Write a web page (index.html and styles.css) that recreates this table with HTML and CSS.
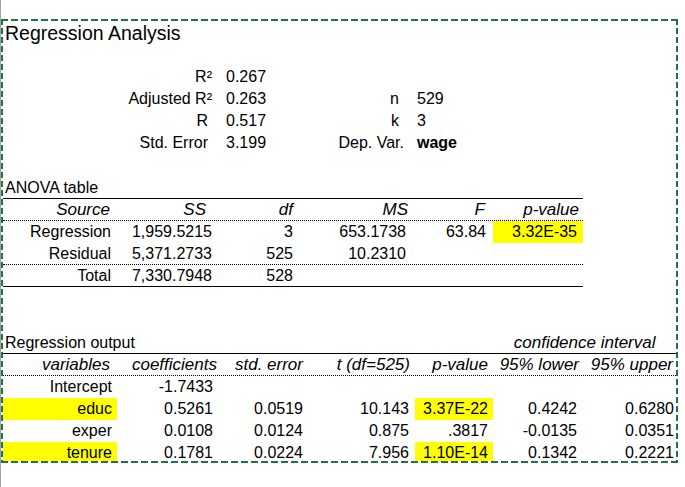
FILE: index.html
```html
<!DOCTYPE html>
<html>
<head>
<meta charset="utf-8">
<link rel="stylesheet" href="styles.css">
</head>
<body>
<div class="frame">
  <div class="title">Regression Analysis</div>

  <div class="stats">
    <div class="row"><span></span><span class="lab">R²</span><span class="val">0.267</span><span class="lab2"></span><span class="val2"></span></div>
    <div class="row"><span></span><span class="lab">Adjusted R²</span><span class="val">0.263</span><span class="lab2">n</span><span class="val2">529</span></div>
    <div class="row"><span></span><span class="lab sp">R</span><span class="val">0.517</span><span class="lab2">k</span><span class="val2">3</span></div>
    <div class="row"><span></span><span class="lab sp">Std. Error</span><span class="val">3.199</span><span class="lab2 dv">Dep. Var.</span><span class="val2 bold">wage</span></div>
  </div>

  <div class="anova">
    <div class="caption">ANOVA table</div>
    <div class="row hdr"><span>Source</span><span>SS</span><span>df</span><span>MS</span><span>F</span><span>p-value</span></div>
    <div class="row"><span>Regression</span><span>1,959.5215</span><span>3</span><span>653.1738</span><span>63.84</span><span class="hl">3.32E-35</span></div>
    <div class="row dotted"><span>Residual</span><span>5,371.2733</span><span>525</span><span>10.2310</span><span></span><span></span></div>
    <div class="row solid"><span>Total</span><span>7,330.7948</span><span>528</span><span></span><span></span><span></span></div>
  </div>

  <div class="output">
    <div class="caption"><span class="cap-left">Regression output</span><span class="ci">confidence interval</span></div>
    <div class="row hdr"><span>variables</span><span>coefficients</span><span>std. error</span><span>t (df=525)</span><span>p-value</span><span>95% lower</span><span>95% upper</span></div>
    <div class="row"><span>Intercept</span><span>-1.7433</span><span></span><span></span><span></span><span></span><span></span></div>
    <div class="row"><span class="hl">educ</span><span>0.5261</span><span>0.0519</span><span>10.143</span><span class="hl">3.37E-22</span><span>0.4242</span><span>0.6280</span></div>
    <div class="row"><span>exper</span><span>0.0108</span><span>0.0124</span><span>0.875</span><span>.3817</span><span>-0.0135</span><span>0.0351</span></div>
    <div class="row"><span class="hl">tenure</span><span>0.1781</span><span>0.0224</span><span>7.956</span><span class="hl">1.10E-14</span><span>0.1342</span><span>0.2221</span></div>
  </div>
</div>
</body>
</html>
```

FILE: styles.css
```css
* { box-sizing: border-box; }

html, body { background: #fff; }

body {
  margin: 0;
  height: 487px;
  border-left: 1px solid #a3a3a3;
  font-family: "Liberation Sans", Arial, sans-serif;
  font-size: 16px;
  color: #000;
  overflow: hidden;
}

.frame {
  margin-top: 19px;
  width: 677px;
  height: 444px;
  border: 2px solid transparent;
  overflow: hidden;
  background-image:
    repeating-linear-gradient(90deg, #217346 0 7px, transparent 7px 10px),
    repeating-linear-gradient(90deg, #217346 0 7px, transparent 7px 10px),
    repeating-linear-gradient(180deg, #217346 0 6px, transparent 6px 9px),
    repeating-linear-gradient(180deg, #217346 0 6px, transparent 6px 9px);
  background-size: 100% 2px, 100% 2px, 2px 100%, 2px 100%;
  background-position: left top, left bottom, left top, right top;
  background-repeat: no-repeat;
  background-origin: border-box;
}

.title {
  height: 24px;
  line-height: 24px;
  font-size: 19.5px;
  padding-left: 2px;
}

.row {
  display: grid;
  grid-template-columns: 114px 101px 90px 107px 78px 90px 93px;
  height: 22px;
  line-height: 22px;
}

.row > span {
  text-align: right;
  white-space: nowrap;
  padding-right: 5px;
}

/* stats block */
.stats { margin-top: 21px; }
.stats .row > .lab { padding-right: 6px; }
.stats .row > .lab.sp { padding-right: 10px; }
.stats .row > .val { text-align: left; padding-left: 8px; }
.stats .row > .lab2 { padding-right: 16px; }
.stats .row > .lab2.dv { padding-right: 11px; }
.stats .row > .val2 { text-align: left; padding-left: 2px; }
.bold { font-weight: bold; }

.caption {
  height: 22px;
  line-height: 22px;
  padding-left: 2px;
  border-bottom: 1px solid #000;
  display: flex;
}

.hdr { font-style: italic; font-size: 17px; border-bottom: 1px dotted #000; }
.dotted { border-bottom: 1px dotted #000; }
.solid { border-bottom: 1px solid #000; }
.hl { background: #ffff00; }

/* ANOVA */
.anova { margin-top: 23px; width: 580px; }
.anova .row > :nth-child(1) { padding-right: 6px; }
.anova .row > :nth-child(2) { padding-right: 6px; }
.anova .row > :nth-child(3) { padding-right: 15px; }
.anova .row > :nth-child(4) { padding-right: 9px; }
.anova .row > :nth-child(5) { padding-right: 7px; }
.anova .row > :nth-child(6) { padding-right: 6px; }
.anova .hdr > :nth-child(1) { padding-right: 7px; }
.anova .hdr > :nth-child(2) { padding-right: 12px; }
.anova .hdr > :nth-child(4) { padding-right: 7px; }
.anova .hdr > :nth-child(5) { padding-right: 8px; }
.anova .hdr > :nth-child(6) { padding-right: 4px; }

/* Regression output */
.output { margin-top: 45px; }
.cap-left { width: 489px; }
.ci { width: 183px; text-align: center; font-style: italic; font-size: 17px; }
.output .row > :nth-child(4) { padding-right: 6px; }
.output .row > :nth-child(6) { padding-right: 6px; }
.output .row > :nth-child(7) { padding-right: 2px; }
.output .hdr > :nth-child(1) { padding-right: 7px; }
.output .hdr > :nth-child(2) { padding-right: 1px; }
.output .hdr > :nth-child(3) { padding-right: 5px; }
.output .hdr > :nth-child(4) { padding-right: 5px; }
.output .hdr > :nth-child(5) { padding-right: 5px; }
.output .hdr > :nth-child(6) { padding-right: 4px; }
.output .hdr > :nth-child(7) { padding-right: 3px; }
```
